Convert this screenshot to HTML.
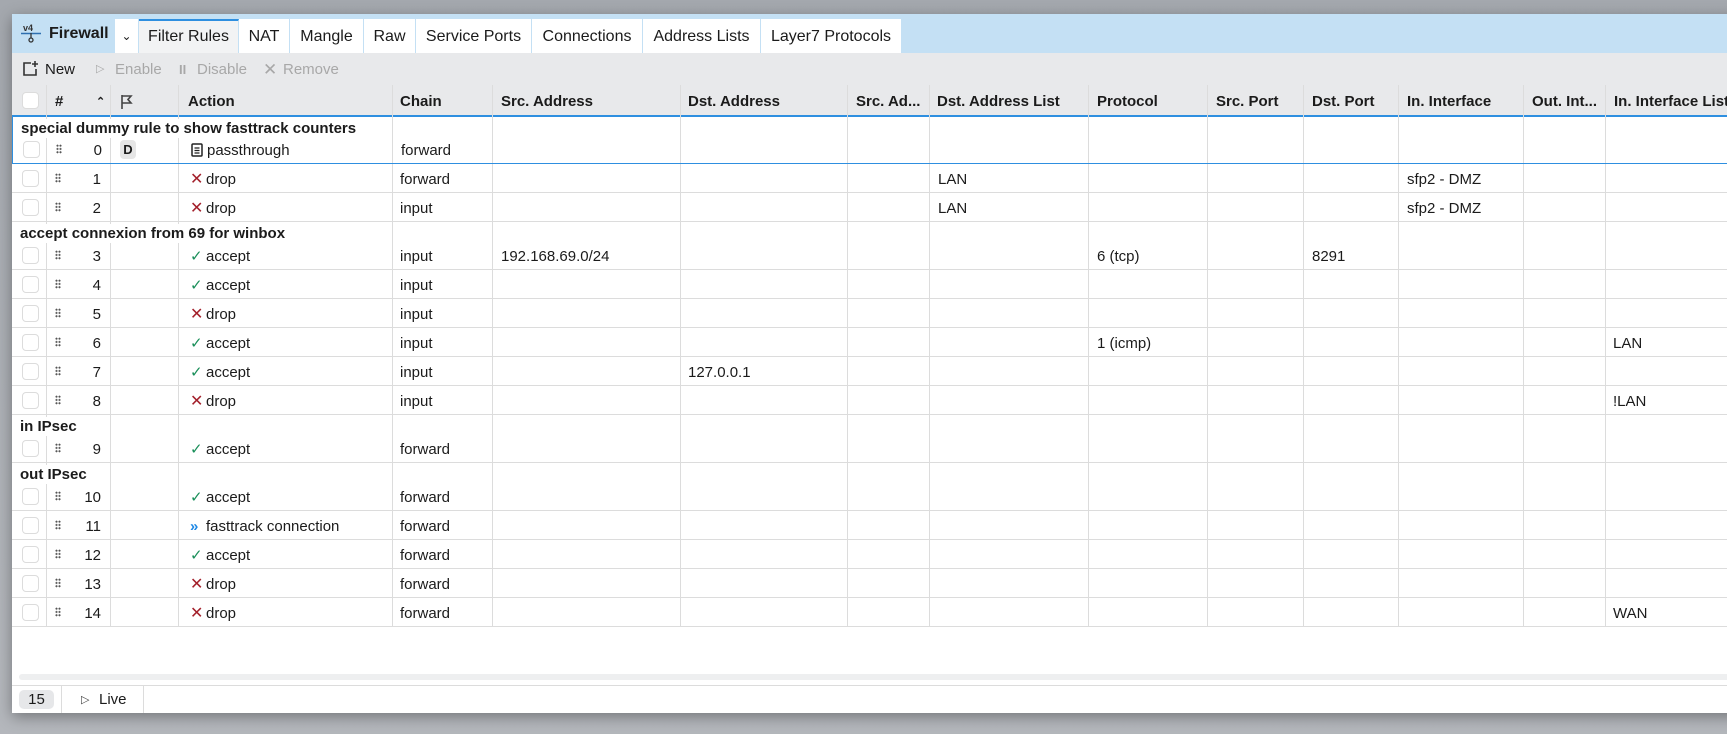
<!DOCTYPE html>
<html><head><meta charset="utf-8"><style>
*{box-sizing:border-box;margin:0;padding:0}
body{width:1727px;height:734px;overflow:hidden;background:linear-gradient(#a4a8ae,#b4b7bc);font-family:"Liberation Sans",sans-serif;color:#1b1b1b;font-size:15px;position:relative}
#w{position:absolute;left:12px;top:14px;width:1730px;height:699px;background:#fff;box-shadow:0 4px 14px rgba(0,0,0,.35);overflow:hidden}
.tb{position:absolute;left:0;top:0;right:0;height:39px;background:#c4e0f4}
.tab{position:absolute;top:5px;height:34px;background:#fff;line-height:35px;font-size:16px;text-align:center;border-right:1px solid #c4e0f4}
.tab.act{background:#f2f3f4;border-top:2px solid #2e8fe0;line-height:32px}
.tool{position:absolute;left:0;right:0;top:39px;height:32px;background:#e8e9eb;line-height:33px;font-size:15px}
.tool span{position:absolute}
.dis{color:#a8a8a8}
.hd{position:absolute;left:0;right:0;top:71px;height:32px;background:#e8e9eb;border-bottom:2px solid #2e8fe0;font-weight:bold;line-height:34px}
.hd span{position:absolute}
.vl{position:absolute;top:71px;height:542px;width:1px;background:#dcdcdc}
.r{position:absolute;left:0;right:0;border-bottom:1px solid #dcdcdc}
.d{position:absolute;left:0;right:0;bottom:0;height:29px;line-height:33px}
.d span{position:absolute}
.cb{left:10px;top:7px;width:17px;height:17px;border:1px solid #dcdcdc;border-radius:4px;background:#fff}
.h{left:43px;top:10px;width:6px;height:10px;background:radial-gradient(circle,#555 0.9px,transparent 1.1px) 0 0/3px 3.3px}
.n{left:50px;width:39px;text-align:right}
.g{position:absolute;left:0;top:2px;background:#fff;padding:0 6px 0 8px;font-weight:bold;line-height:19px;height:19px;z-index:3}
.x{color:#a3202b;font-size:16px}
.ok{color:#1a8f5a}
.a{left:194px}.ai{left:178px}.ch{left:388px}
</style></head><body>
<div id="w">
<div class="tb">
 <svg style="position:absolute;left:8px;top:9px" width="22" height="20" viewBox="0 0 22 20"><text x="3" y="8" font-family="Liberation Sans" font-size="9" font-weight="bold" fill="#333">v4</text><line x1="1" y1="10.5" x2="21" y2="10.5" stroke="#2e6fb0" stroke-width="1.6"/><line x1="11" y1="10" x2="11" y2="15" stroke="#333" stroke-width="1.3"/><circle cx="11" cy="17" r="2" fill="none" stroke="#333" stroke-width="1.3"/></svg>
 <span style="position:absolute;left:37px;top:0;line-height:40px;font-weight:bold;font-size:16px">Firewall</span>
 <div class="tab" style="left:103px;width:24px;font-size:12px">&#8964;</div>
 <div class="tab act" style="left:127px;width:100px">Filter Rules</div>
 <div class="tab" style="left:227px;width:51px">NAT</div>
 <div class="tab" style="left:278px;width:74px">Mangle</div>
 <div class="tab" style="left:352px;width:52px">Raw</div>
 <div class="tab" style="left:404px;width:116px">Service Ports</div>
 <div class="tab" style="left:520px;width:111px">Connections</div>
 <div class="tab" style="left:631px;width:118px">Address Lists</div>
 <div class="tab" style="left:749px;width:140px;border-right:none">Layer7 Protocols</div>
</div>
<div class="tool">
 <svg style="position:absolute;left:10px;top:8px" width="17" height="16" viewBox="0 0 17 16"><path d="M9 2H2v12h12V8" fill="none" stroke="#333" stroke-width="1.6"/><path d="M13 0v6M10 3h6" stroke="#333" stroke-width="1.6"/></svg>
 <span style="left:33px">New</span>
 <span class="dis" style="left:84px;font-size:11px">&#9655;</span><span class="dis" style="left:103px">Enable</span>
 <span class="dis" style="left:167px;font-size:13px;font-weight:bold">II</span><span class="dis" style="left:185px">Disable</span>
 <span class="dis" style="left:251px;font-size:17px">&#10005;</span><span class="dis" style="left:271px">Remove</span>
</div>
<div class="hd">
 <span class="cb" style="top:7px"></span>
 <span style="left:43px">#</span><span style="left:84px;font-size:11px">&#8963;</span>
 <svg style="position:absolute;left:108px;top:9px" width="14" height="16" viewBox="0 0 14 16"><path d="M2 1v14M2 2h9l-3 3.5 3 3.5H2" fill="none" stroke="#444" stroke-width="1.6"/></svg>
 <span style="left:176px">Action</span><span style="left:388px">Chain</span><span style="left:489px">Src. Address</span><span style="left:676px">Dst. Address</span><span style="left:844px">Src. Ad...</span><span style="left:925px">Dst. Address List</span><span style="left:1085px">Protocol</span><span style="left:1204px">Src. Port</span><span style="left:1300px">Dst. Port</span><span style="left:1395px">In. Interface</span><span style="left:1520px">Out. Int...</span><span style="left:1602px">In. Interface List</span>
</div>
<div class="vl" style="left:34px"></div><div class="vl" style="left:98px"></div><div class="vl" style="left:166px"></div><div class="vl" style="left:380px"></div><div class="vl" style="left:480px"></div><div class="vl" style="left:668px"></div><div class="vl" style="left:835px"></div><div class="vl" style="left:917px"></div><div class="vl" style="left:1076px"></div><div class="vl" style="left:1195px"></div><div class="vl" style="left:1291px"></div><div class="vl" style="left:1386px"></div><div class="vl" style="left:1511px"></div><div class="vl" style="left:1593px"></div>

<div class="r" style="top:103px;height:47px;border:1px solid #2e8fe0;border-top:none"><div class="g">special dummy rule to show fasttrack counters</div><div class="d"><span class="cb"></span><span class="h"></span><span class="n">0</span><span style="left:107px;top:6px;width:16px;height:19px;background:#e6e6e6;border-radius:4px;font-weight:bold;font-size:13px;line-height:19px;text-align:center">D</span><span class="ai"><svg width="12" height="14" viewBox="0 0 12 14" style="vertical-align:-2px"><rect x="1" y="1" width="10" height="12" rx="1" fill="none" stroke="#222" stroke-width="1.5"/><path d="M3.5 5h5M3.5 7.5h5M3.5 10h5" stroke="#222" stroke-width="1.3"/></svg></span><span class="a">passthrough</span><span class="ch">forward</span></div></div>
<div class="r" style="top:150px;height:29px"><div class="d"><span class="cb"></span><span class="h"></span><span class="n">1</span><span class="ai x">&#10005;</span><span class="a">drop</span><span class="ch">forward</span><span style="left:926px">LAN</span><span style="left:1395px">sfp2 - DMZ</span></div></div>
<div class="r" style="top:179px;height:29px"><div class="d"><span class="cb"></span><span class="h"></span><span class="n">2</span><span class="ai x">&#10005;</span><span class="a">drop</span><span class="ch">input</span><span style="left:926px">LAN</span><span style="left:1395px">sfp2 - DMZ</span></div></div>
<div class="r" style="top:208px;height:48px"><div class="g">accept connexion from 69 for winbox</div><div class="d"><span class="cb"></span><span class="h"></span><span class="n">3</span><span class="ai ok">&#10003;</span><span class="a">accept</span><span class="ch">input</span><span style="left:489px">192.168.69.0/24</span><span style="left:1085px">6 (tcp)</span><span style="left:1300px">8291</span></div></div>
<div class="r" style="top:256px;height:29px"><div class="d"><span class="cb"></span><span class="h"></span><span class="n">4</span><span class="ai ok">&#10003;</span><span class="a">accept</span><span class="ch">input</span></div></div>
<div class="r" style="top:285px;height:29px"><div class="d"><span class="cb"></span><span class="h"></span><span class="n">5</span><span class="ai x">&#10005;</span><span class="a">drop</span><span class="ch">input</span></div></div>
<div class="r" style="top:314px;height:29px"><div class="d"><span class="cb"></span><span class="h"></span><span class="n">6</span><span class="ai ok">&#10003;</span><span class="a">accept</span><span class="ch">input</span><span style="left:1085px">1 (icmp)</span><span style="left:1601px">LAN</span></div></div>
<div class="r" style="top:343px;height:29px"><div class="d"><span class="cb"></span><span class="h"></span><span class="n">7</span><span class="ai ok">&#10003;</span><span class="a">accept</span><span class="ch">input</span><span style="left:676px">127.0.0.1</span></div></div>
<div class="r" style="top:372px;height:29px"><div class="d"><span class="cb"></span><span class="h"></span><span class="n">8</span><span class="ai x">&#10005;</span><span class="a">drop</span><span class="ch">input</span><span style="left:1601px">!LAN</span></div></div>
<div class="r" style="top:401px;height:48px"><div class="g">in IPsec</div><div class="d"><span class="cb"></span><span class="h"></span><span class="n">9</span><span class="ai ok">&#10003;</span><span class="a">accept</span><span class="ch">forward</span></div></div>
<div class="r" style="top:449px;height:48px"><div class="g">out IPsec</div><div class="d"><span class="cb"></span><span class="h"></span><span class="n">10</span><span class="ai ok">&#10003;</span><span class="a">accept</span><span class="ch">forward</span></div></div>
<div class="r" style="top:497px;height:29px"><div class="d"><span class="cb"></span><span class="h"></span><span class="n">11</span><span class="ai" style="color:#1e88e5;font-weight:bold">&#187;</span><span class="a">fasttrack connection</span><span class="ch">forward</span></div></div>
<div class="r" style="top:526px;height:29px"><div class="d"><span class="cb"></span><span class="h"></span><span class="n">12</span><span class="ai ok">&#10003;</span><span class="a">accept</span><span class="ch">forward</span></div></div>
<div class="r" style="top:555px;height:29px"><div class="d"><span class="cb"></span><span class="h"></span><span class="n">13</span><span class="ai x">&#10005;</span><span class="a">drop</span><span class="ch">forward</span></div></div>
<div class="r" style="top:584px;height:29px"><div class="d"><span class="cb"></span><span class="h"></span><span class="n">14</span><span class="ai x">&#10005;</span><span class="a">drop</span><span class="ch">forward</span><span style="left:1601px">WAN</span></div></div>

<div style="position:absolute;left:7px;right:0;top:660px;height:6px;background:#eeeff0;border-radius:3px"></div>
<div style="position:absolute;left:0;right:0;top:671px;height:28px;border-top:1px solid #dcdcdc;line-height:28px">
 <span style="position:absolute;left:7px;top:4px;width:35px;height:19px;background:#e6e7e9;border-radius:5px;line-height:20px;text-align:center">15</span>
 <span style="position:absolute;left:49px;top:0;width:1px;height:28px;background:#dcdcdc"></span>
 <span style="position:absolute;left:69px;font-size:11px;color:#444">&#9655;</span><span style="position:absolute;left:87px">Live</span>
 <span style="position:absolute;left:131px;top:0;width:1px;height:28px;background:#dcdcdc"></span>
</div>
</div>
</body></html>
